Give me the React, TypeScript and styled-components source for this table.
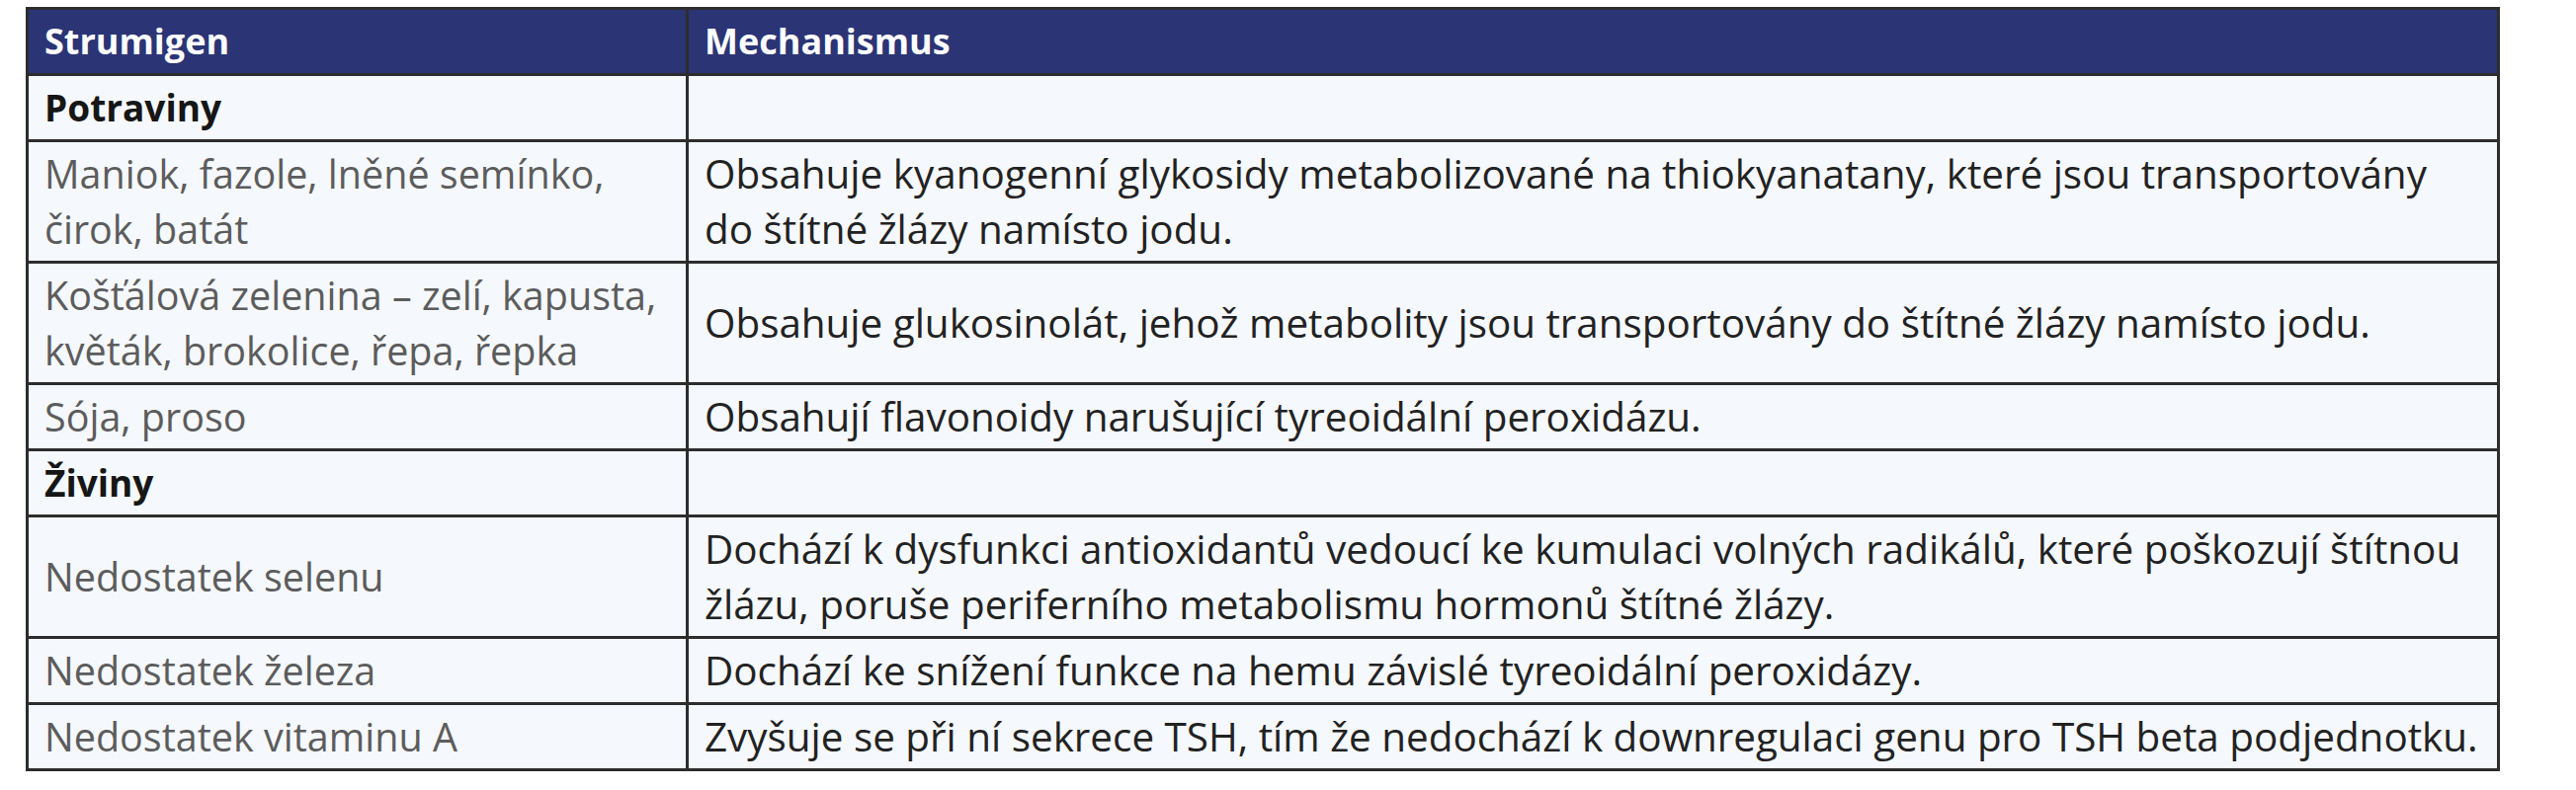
import React from "react";
import styled, { createGlobalStyle } from "styled-components";

type Row = {
  name: string[];
  mechanism: string[];
  group?: boolean;
};

const rows: Row[] = [
  { name: ["Potraviny"], mechanism: [], group: true },
  {
    name: ["Maniok, fazole, lněné semínko,", "čirok, batát"],
    mechanism: [
      "Obsahuje kyanogenní glykosidy metabolizované na thiokyanatany, které jsou transportovány",
      "do štítné žlázy namísto jodu.",
    ],
  },
  {
    name: ["Košťálová zelenina – zelí, kapusta,", "květák, brokolice, řepa, řepka"],
    mechanism: [
      "Obsahuje glukosinolát, jehož metabolity jsou transportovány do štítné žlázy namísto jodu.",
    ],
  },
  {
    name: ["Sója, proso"],
    mechanism: ["Obsahují flavonoidy narušující tyreoidální peroxidázu."],
  },
  { name: ["Živiny"], mechanism: [], group: true },
  {
    name: ["Nedostatek selenu"],
    mechanism: [
      "Dochází k dysfunkci antioxidantů vedoucí ke kumulaci volných radikálů, které poškozují štítnou",
      "žlázu, poruše periferního metabolismu hormonů štítné žlázy.",
    ],
  },
  {
    name: ["Nedostatek železa"],
    mechanism: ["Dochází ke snížení funkce na hemu závislé tyreoidální peroxidázy."],
  },
  {
    name: ["Nedostatek vitaminu A"],
    mechanism: [
      "Zvyšuje se při ní sekrece TSH, tím že nedochází k downregulaci genu pro TSH beta podjednotku.",
    ],
  },
];

export default function App() {
  return (
    <>
      <GlobalStyle />
      <Page>
        <Table>
          <colgroup>
            <col style={{ width: "668px" }} />
            <col />
          </colgroup>
          <thead>
            <tr>
              <HeadCell>Strumigen</HeadCell>
              <HeadCell>Mechanismus</HeadCell>
            </tr>
          </thead>
          <tbody>
            {rows.map((row) => (
              <tr key={row.name[0]}>
                <Cell $tone={row.group ? "group" : "muted"}>
                  {row.name.map((line) => (
                    <Line key={line}>{line}</Line>
                  ))}
                </Cell>
                <Cell $tone="text">
                  {row.mechanism.map((line) => (
                    <Line key={line}>{line}</Line>
                  ))}
                </Cell>
              </tr>
            ))}
          </tbody>
        </Table>
      </Page>
    </>
  );
}

const GlobalStyle = createGlobalStyle`
  html, body {
    margin: 0;
    background: #ffffff;
  }
  body {
    font-family: "Open Sans", "Liberation Sans", sans-serif;
  }
`;

const Page = styled.div`
  padding: 7px 0 0 26px;
`;

const Table = styled.table`
  width: 2504px;
  border-collapse: collapse;
  table-layout: fixed;
  border: 3px solid #2d2d2d;
`;

const HeadCell = styled.th`
  background: #2b3475;
  color: #ffffff;
  font-weight: 700;
  font-size: 36px;
  text-align: left;
  line-height: 56px;
  padding: 4px 16px;
  border: 3px solid #2d2d2d;
`;

const toneColor = {
  group: "#161616",
  muted: "#5c5c5c",
  text: "#222222",
};

const fontSize = {
  group: "37px",
  muted: "39.5px",
  text: "40.4px",
};

const Cell = styled.td<{ $tone: "group" | "muted" | "text" }>`
  background: #f5f8fc;
  color: ${(p) => toneColor[p.$tone]};
  font-weight: ${(p) => (p.$tone === "group" ? 700 : 400)};
  font-size: ${(p) => fontSize[p.$tone]};
  line-height: 56px;
  padding: 4px 16px;
  vertical-align: middle;
  border: 3px solid #2d2d2d;
  height: 56px;
`;

const Line = styled.div`
  white-space: nowrap;
`;
